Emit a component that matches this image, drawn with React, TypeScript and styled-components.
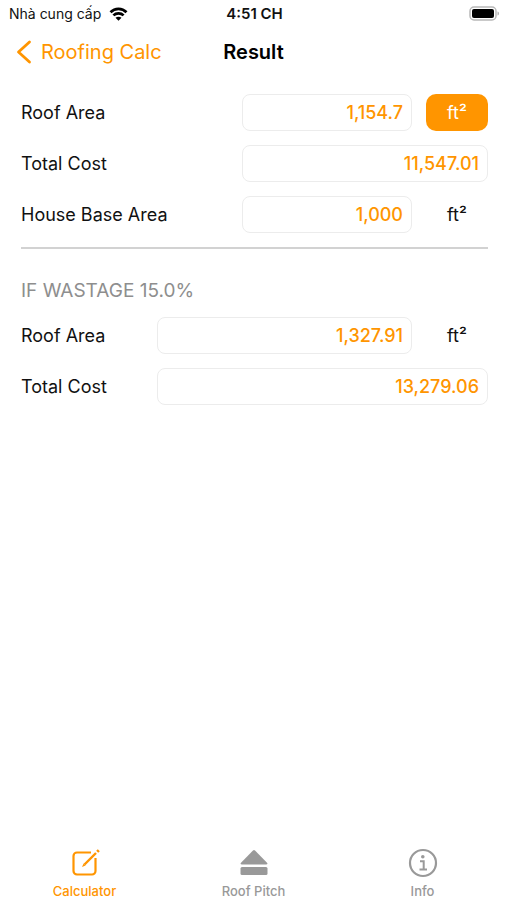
import React from "react";
import styled, { createGlobalStyle } from "styled-components";

const ORANGE = "#ff9500";
const GRAY = "#999999";

const GlobalStyle = createGlobalStyle`
  *, *::before, *::after { box-sizing: border-box; }
  body {
    margin: 0;
    background: #fff;
    color: #111;
    font-family: Inter, "Liberation Sans", sans-serif;
    font-size: 18px;
  }
  button, input { font: inherit; }
`;

const Screen = styled.div`
  display: flex;
  flex-direction: column;
  min-height: 100vh;
`;

const StatusBar = styled.div`
  display: grid;
  grid-template-columns: 1fr auto 1fr;
  align-items: center;
  height: 27px;
  padding: 0 7px 0 9px;
  font-size: 14px;
  line-height: 20px;
`;

const Carrier = styled.div`
  display: flex;
  align-items: center;
  gap: 8px;
`;

const Clock = styled.time`
  font-size: 15px;
  font-weight: 600;
`;

const BatteryIcon = styled.svg`
  justify-self: end;
`;

const NavBar = styled.header`
  display: grid;
  grid-template-columns: 1fr auto 1fr;
  align-items: center;
  height: 50px;
  padding: 0 16px;
`;

const BackButton = styled.button`
  display: flex;
  align-items: center;
  justify-self: start;
  gap: 9px;
  padding: 0;
  border: 0;
  background: none;
  color: ${ORANGE};
  font-size: 20px;
  line-height: 26px;
  white-space: nowrap;
  cursor: pointer;
`;

const Title = styled.h1`
  margin: 0;
  color: #000;
  font-size: 20px;
  font-weight: 600;
  line-height: 26px;
`;

const Content = styled.main`
  flex: 1;
  padding: 17px 19px 0 21px;
`;

const Rows = styled.div`
  display: flex;
  flex-direction: column;
  gap: 14px;
`;

const Row = styled.div<{ $labelWidth: number }>`
  display: grid;
  grid-template-columns: ${(p) => p.$labelWidth}px 1fr auto;
  align-items: center;
  height: 37px;
`;

const ValueInput = styled.input`
  width: 100%;
  min-width: 0;
  height: 37px;
  padding: 0 8px;
  border: 1px solid #ececec;
  border-radius: 8px;
  background: #fff;
  color: ${ORANGE};
  font-weight: 500;
  text-align: right;
  outline: none;
`;

const Unit = styled.span`
  width: 62px;
  margin-left: 14px;
  text-align: center;
`;

const UnitButton = styled.button`
  width: 62px;
  height: 37px;
  margin-left: 14px;
  padding: 0;
  border: 0;
  border-radius: 10px;
  background: ${ORANGE};
  color: #fff;
  cursor: pointer;
`;

const Divider = styled.hr`
  height: 2px;
  margin: 14px 0 28px;
  border: 0;
  background: #d2d2d2;
`;

const SectionTitle = styled.h2`
  margin: 0 0 13px;
  color: #8e8e8e;
  font-size: 19px;
  font-weight: 400;
  line-height: 27px;
`;

const TabBar = styled.nav`
  display: grid;
  grid-template-columns: repeat(3, 1fr);
  height: 52px;
`;

const Tab = styled.button<{ $active?: boolean }>`
  display: flex;
  flex-direction: column;
  align-items: center;
  gap: 5px;
  padding: 0;
  border: 0;
  background: none;
  color: ${(p) => (p.$active ? ORANGE : GRAY)};
  font-size: 13px;
  font-weight: 500;
  line-height: 16px;
  cursor: pointer;
`;

type FieldProps = {
  id: string;
  label: string;
  value: string;
  labelWidth: number;
  unit?: "plain" | "button";
};

function Field({ id, label, value, labelWidth, unit }: FieldProps) {
  return (
    <Row $labelWidth={labelWidth}>
      <label htmlFor={id}>{label}</label>
      <ValueInput id={id} value={value} readOnly />
      {unit === "button" && <UnitButton type="button">ft²</UnitButton>}
      {unit === "plain" && <Unit>ft²</Unit>}
    </Row>
  );
}

export default function App() {
  return (
    <Screen>
      <GlobalStyle />
      <StatusBar>
        <Carrier>
          Nhà cung cấp
          <svg width="19" height="14" viewBox="0 0 18 14" fill="none" stroke="#000" strokeWidth="2.7" aria-hidden="true">
            <path d="M1 5.3C5.4.8 12.6.8 17 5.3" />
            <path d="M3.9 8.4c2.800-2.800 7.400-2.800 10.200 0" />
            <path d="M9 13.800 6 10.800c1.700-1.500 4.300-1.500 6 0Z" fill="#000" stroke="none" />
          </svg>
        </Carrier>
        <Clock>4:51 CH</Clock>
        <BatteryIcon width="31" height="15" viewBox="0 0 31 15" aria-hidden="true">
          <rect x="1" y="1" width="26" height="13" rx="4" fill="#fff" stroke="#b8b8b8" strokeWidth="1.500" />
          <rect x="3" y="3" width="22" height="9" rx="2" fill="#000" />
          <path d="M28.500 5.500c2 .5 2 3.500 0 4Z" fill="#b0b0b0" />
        </BatteryIcon>
      </StatusBar>
      <NavBar>
        <BackButton type="button">
          <svg width="16" height="24" viewBox="0 0 16 24" fill="none" stroke="currentColor" strokeWidth="2.800" strokeLinecap="round" strokeLinejoin="round" aria-hidden="true">
            <path d="M13.500 2 2.500 12l11 10" />
          </svg>
          Roofing Calc
        </BackButton>
        <Title>Result</Title>
      </NavBar>
      <Content>
        <Rows>
          <Field id="roof-area" label="Roof Area" value="1,154.7" labelWidth={221} unit="button" />
          <Field id="total-cost" label="Total Cost" value="11,547.01" labelWidth={221} />
          <Field id="base-area" label="House Base Area" value="1,000" labelWidth={221} unit="plain" />
        </Rows>
        <Divider />
        <SectionTitle>IF WASTAGE 15.0%</SectionTitle>
        <Rows>
          <Field id="waste-area" label="Roof Area" value="1,327.91" labelWidth={136} unit="plain" />
          <Field id="waste-cost" label="Total Cost" value="13,279.06" labelWidth={136} />
        </Rows>
      </Content>
      <TabBar>
        <Tab type="button" $active aria-current="page">
          <svg width="30" height="30" viewBox="0 0 30 30" fill="none" stroke="currentColor" aria-hidden="true">
            <path d="M21 4.500H7A3.500 3.500 0 0 0 3.500 8v15A3.500 3.500 0 0 0 7 26.500h15a3.500 3.500 0 0 0 3.500-3.500V10" strokeWidth="2.200" />
            <path d="M14.500 16.500 26 5" strokeWidth="2.400" />
            <path d="m12 19 1.600-3.600 2 2Z" fill="currentColor" stroke="none" />
            <path d="m27.200 3.800 1.600-1.600" strokeWidth="2.800" />
          </svg>
          Calculator
        </Tab>
        <Tab type="button">
          <svg width="30" height="30" viewBox="0 0 30 30" fill="currentColor" aria-hidden="true">
            <path d="M14 2.500q1-1 2 0l12 12.300q1.200 1.700-1 1.700H3q-2.200 0-1-1.700Z" />
            <rect x="1.500" y="19" width="27" height="8" rx="1.500" />
          </svg>
          Roof Pitch
        </Tab>
        <Tab type="button">
          <svg width="30" height="30" viewBox="0 0 30 30" fill="none" stroke="currentColor" strokeWidth="2.200" aria-hidden="true">
            <circle cx="15" cy="15" r="13" />
            <circle cx="14.800" cy="8.800" r="1.800" fill="currentColor" stroke="none" />
            <path d="M12 13.200h3.700v8M11.500 21.500h7.500" strokeWidth="2" />
          </svg>
          Info
        </Tab>
      </TabBar>
    </Screen>
  );
}
